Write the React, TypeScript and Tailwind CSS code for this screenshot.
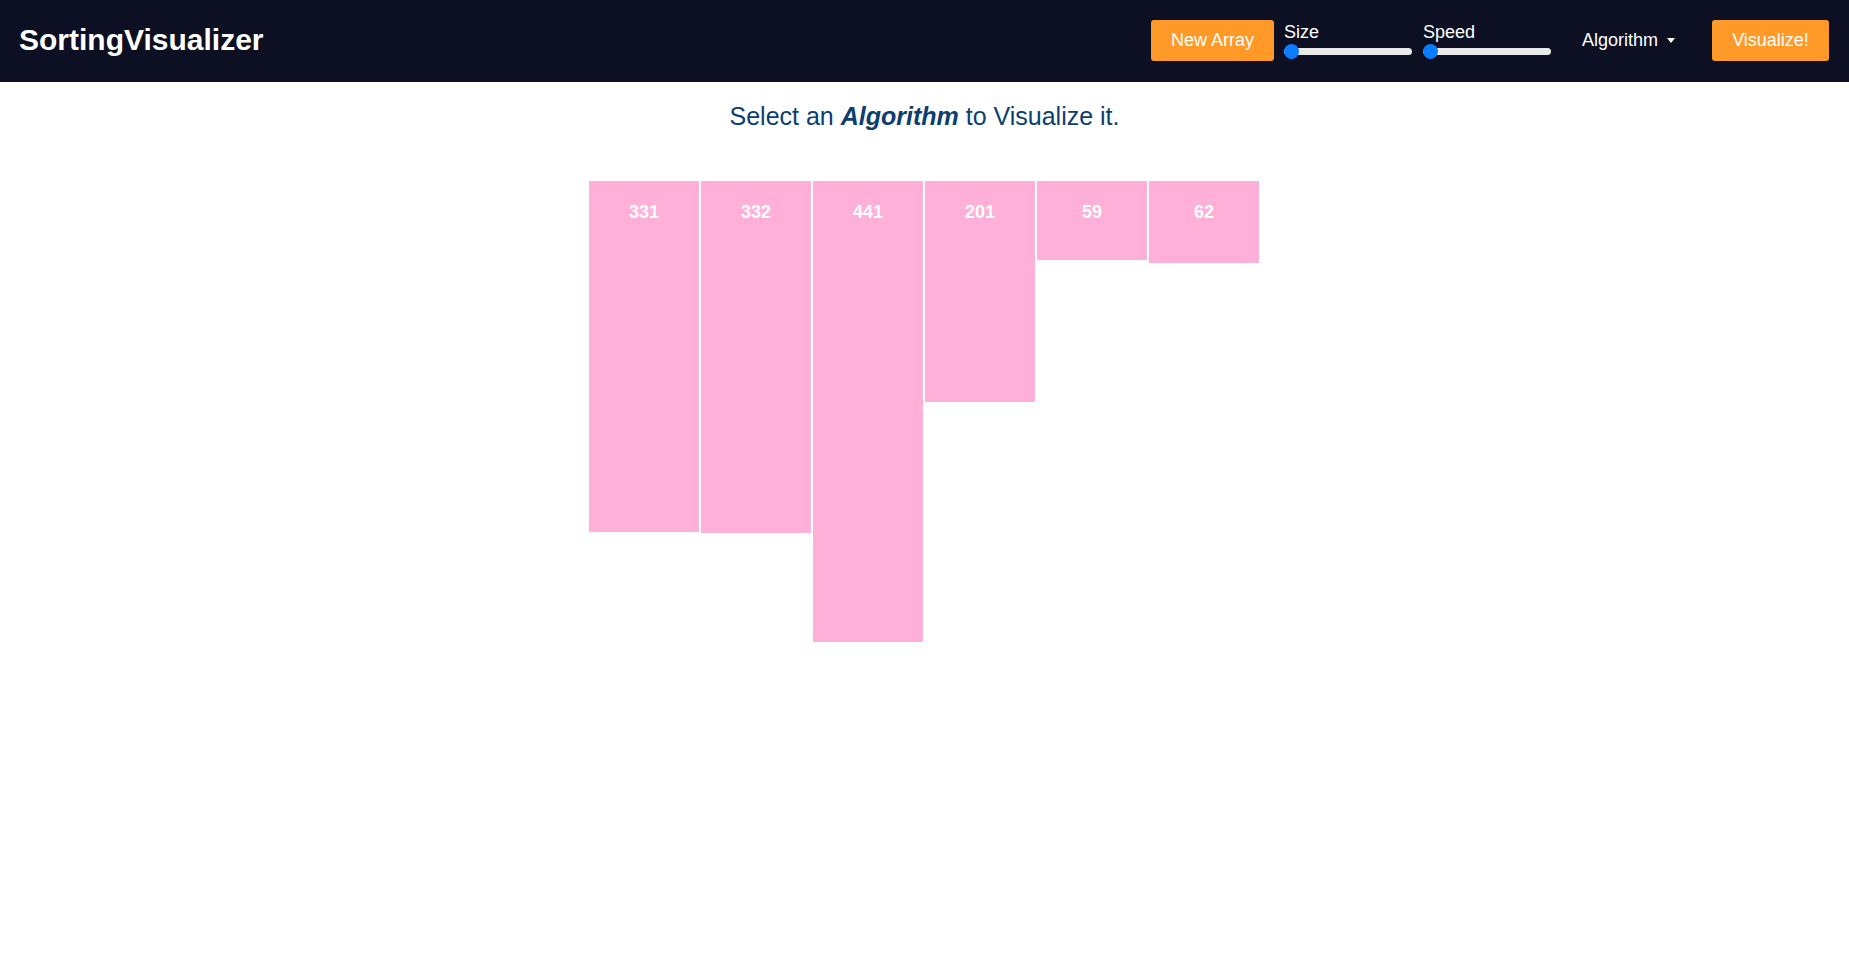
import React from "react";

const values = [331, 332, 441, 201, 59, 62];

function Slider({ label }: { label: string }) {
  return (
    <div className="flex flex-col w-[128px]">
      <span className="text-[18px] leading-[20px] text-white">{label}</span>
      <div className="relative mt-[2px] h-[15px] flex items-center">
        <div className="h-[7px] w-full rounded-full bg-[#e9e9e9]" />
        <div className="absolute left-0 top-0 h-[15px] w-[15px] rounded-full bg-[#0b7bff]" />
      </div>
    </div>
  );
}

export default function App() {
  return (
    <div className="min-h-screen bg-white" style={{ fontFamily: '"Liberation Sans", Arial, sans-serif' }}>
      <nav className="h-[82px] bg-[#0c1022] flex items-center pl-[19px] pr-5 pb-[2px]">
        <div className="text-[30px] leading-[34px] font-bold text-white">SortingVisualizer</div>
        <div className="ml-auto flex items-center">
          <button className="h-[41px] w-[123px] rounded-[3px] bg-[#ff9a29] text-white text-[18px] leading-[20px]">
            New Array
          </button>
          <div className="ml-[10px]">
            <Slider label="Size" />
          </div>
          <div className="ml-[11px]">
            <Slider label="Speed" />
          </div>
          <div className="ml-[31px] flex items-center text-white text-[18px] leading-[20px]">
            <span>Algorithm</span>
            <span className="ml-[9px] w-0 h-0 border-l-[4px] border-r-[4px] border-t-[5px] border-l-transparent border-r-transparent border-t-white" />
          </div>
          <button className="ml-[37px] h-[41px] w-[117px] rounded-[3px] bg-[#ff9a29] text-white text-[18px] leading-[20px]">
            Visualize!
          </button>
        </div>
      </nav>
      <h1 className="mt-5 text-center text-[25px] leading-[28px] text-[#0c3e6e]">
        Select an <b className="italic font-bold">Algorithm</b> to Visualize it.
      </h1>
      <div className="mt-[51px] flex justify-center items-start pr-px">
        {values.map((v, i) => (
          <div
            key={i}
            className="mx-px w-[110px] bg-[#ffb0d8] text-white font-bold text-[18px] leading-[20px] text-center pt-[21px]"
            style={{ height: v + 20 }}
          >
            {v}
          </div>
        ))}
      </div>
    </div>
  );
}
